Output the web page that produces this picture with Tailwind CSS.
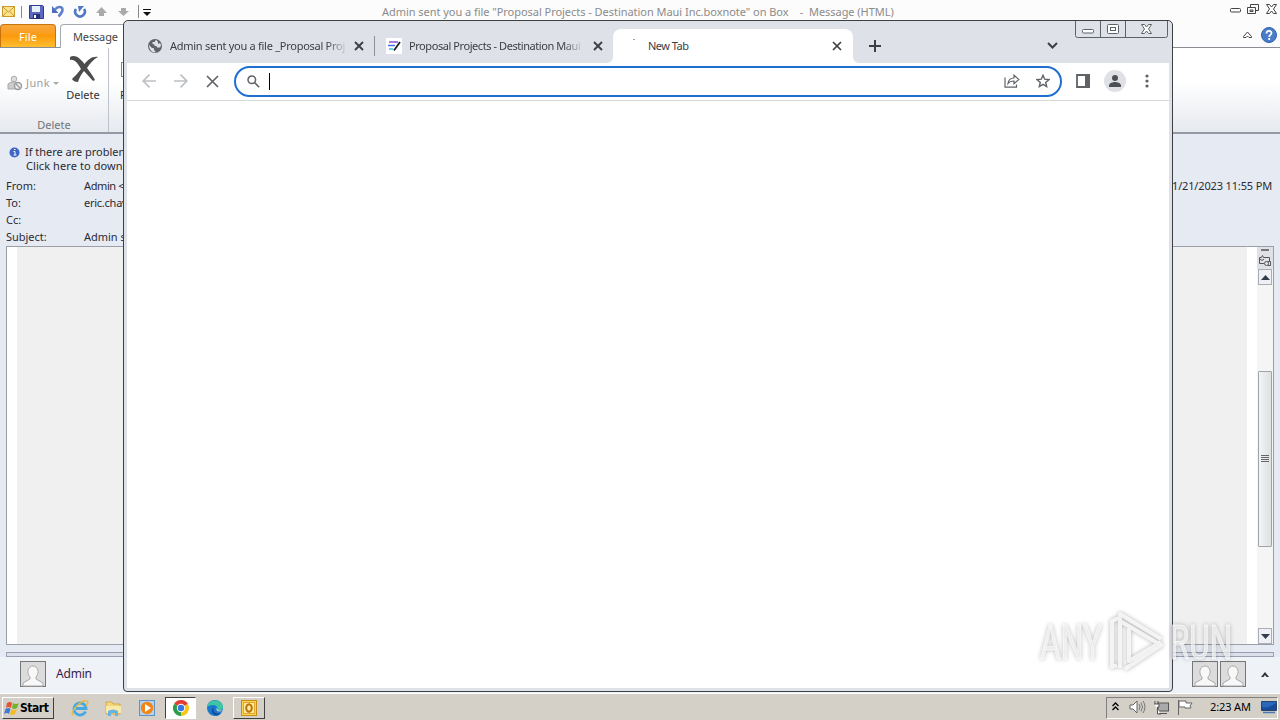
<!DOCTYPE html>
<html lang="en">
<head>
    <meta charset="UTF-8">
    <meta name="viewport" content="width=device-width, initial-scale=1.0">
    <title>New Tab</title>
    <script src="https://cdn.jsdelivr.net/npm/@tailwindcss/browser@4"></script>
</head>
<body class="w-[1280px] h-[720px] overflow-hidden">
<div class="relative w-[1280px] h-[720px] overflow-hidden flex flex-col bg-[#e6eaf2] font-['Noto_Sans','Liberation_Sans',sans-serif] text-[11px] leading-[14px] text-[#2b2b33] whitespace-nowrap">

    <!-- Outlook title bar -->
    <header class="h-6 shrink-0 flex items-start bg-[#fcfcfc]">
        <div class="w-[382px] h-[23px] flex items-center">
            <svg class="ml-[2px]" width="13" height="11" viewBox="0 0 13 11"><rect x=".5" y=".5" width="12" height="10" fill="#fbe38c" stroke="#c9992c"/><path d="M1 1l5.500 5L12 1M1 10l4-4.500M12 10L8 5.500" fill="none" stroke="#c9992c"/></svg>
            <div class="w-px h-3 bg-[#888] ml-[6px]"></div>
            <svg class="ml-[7px]" width="15" height="14" viewBox="0 0 15 14"><path d="M.5.500h13l1 1v12H.5z" fill="#5a68c4" stroke="#2f3b91"/><path d="M3 1h8v6H3z" fill="#e8f0fc"/><path d="M4 9h7v5H4z" fill="#27306f"/><path d="M5 10h2v3H5z" fill="#fff"/></svg>
            <svg class="ml-[7px]" width="14" height="14" viewBox="0 0 14 14"><path d="M4 4.500c3-4 8-3 7.500.5-.3 2.500-2 4.500-4 6.500" fill="none" stroke="#5b7fca" stroke-width="2.500"/><path d="M1 1v7h6.500z" fill="#4a6dbd"/></svg>
            <svg class="ml-[8px]" width="14" height="14" viewBox="0 0 14 14"><path d="M3 4a4.800 4.800 0 1 0 8 0" fill="none" stroke="#4f78c6" stroke-width="2.600"/><path d="M5 1h6L6 7z" fill="#4f78c6"/></svg>
            <svg class="ml-[8px]" width="13" height="10" viewBox="0 0 13 10"><path d="M6.500 0L12 6H9v3H4V6H1z" fill="#aaa"/></svg>
            <svg class="ml-[9px]" width="13" height="10" viewBox="0 0 13 10"><path d="M6.500 9L1 4h3V1h5v3h3z" fill="#aaa"/></svg>
            <div class="w-px h-[13px] bg-[#888] ml-[8px]"></div>
            <svg class="ml-[4px] mt-px" width="8" height="7" viewBox="0 0 8 7"><path d="M0 0h8v1H0zM0 3h8L4 7z" fill="#111"/></svg>
        </div>
        <div class="pt-[5px] text-[#8b8b8b] w-[848px] tracking-[-0.040px]"><span class="whitespace-pre">Admin sent you a file "Proposal Projects - Destination Maui Inc.boxnote" on Box    -  Message (HTML)</span></div>
        <svg class="mt-[3px]" width="50" height="12" viewBox="0 0 50 12" fill="none" stroke="#444"><rect x=".5" y="5.500" width="10" height="3.500" rx="1"/><path d="M20.500 4V1.500h8v6H26M17.500 4.500h8v6h-8zM20 7h3v1.500h-3z"/><path d="M36.500 1.500h3l2 2.500 2-2.500h3L43.500 6l3 4.500h-3l-2-2.500-2 2.500h-3L39.500 6z"/></svg>
    </header>

    <!-- Ribbon tabs -->
    <nav class="h-6 shrink-0 flex items-end bg-[#fcfcfc] border-b border-[#8a8d94]">
        <div class="w-[56px] h-[23px] rounded-t-[4px] border border-b-0 border-[#c9730c] bg-linear-to-b from-[#f7a83c] via-[#fb9a08] to-[#ffbe2e] text-white text-center leading-[23px] tracking-[0.100px]">File</div>
        <div class="ml-[4px] w-[80px] h-[24px] -mb-px rounded-t-[4px] border border-b-0 border-[#a5a9b0] bg-white pl-[12px] leading-[23px] text-[#444] tracking-[-0.150px]">Message</div>
        <svg class="ml-auto mb-[4px]" width="38" height="16" viewBox="0 0 38 16"><path d="M3.500 9.500L7.500 5l4 4.500v1H9L7.500 9 6 10.500H3.500z" fill="none" stroke="#444"/><circle cx="29" cy="8" r="7.500" fill="#4a7cc8" stroke="#2e5fae"/><path d="M26.500 6.500c0-3.500 5-3.300 5-.5 0 2-2.300 1.700-2.300 4M29.200 11v2" stroke="#fff" stroke-width="1.800" fill="none"/></svg>
        <div class="w-[2px]"></div>
    </nav>

    <!-- Ribbon -->
    <section class="h-[86px] shrink-0 flex bg-linear-to-b from-white from-40% to-[#e6e9ee] border-b-2 border-[#9599a1]">
        <div class="w-[109px] h-full border-r border-[#bfc3ca] flex flex-col">
            <div class="flex h-[70px]">
                <div class="flex items-center pl-[7px] text-[#a0a0a0] w-[60px] h-[70px]">
                    <svg width="16" height="16" viewBox="0 0 16 16"><circle cx="7" cy="4" r="2.800" fill="#ddd" stroke="#aaa"/><path d="M1 14V9l3-2h5l3 3v4z" fill="#ccc" stroke="#aaa"/><circle cx="11" cy="11" r="3.500" fill="#eee" stroke="#999" stroke-width="1.400"/><path d="M9 9l4 4" stroke="#999" stroke-width="1.300"/></svg>
                    <span class="ml-[3px] tracking-[0.400px]">Junk</span>
                    <svg class="ml-[3px]" width="6" height="3"><path d="M0 0h6L3 3z" fill="#aaa"/></svg>
                </div>
                <div class="w-[46px] flex flex-col items-center pt-[7px]">
                    <svg class="ml-px" width="30" height="28" viewBox="0 0 30 28"><path d="M1 2C6-1 11 3 15.500 9 19 5 23 1 29 2c-4 2-8 6-11 11 3 4 6 8 8 12l-2 1c-3-3-6-7-9-10-3 4-5 7-6 11-3 0-5-1-6-3 3-3 6-6 9-10C9 9 6 4 1 5z" fill="#4c4c4c"/></svg>
                    <div class="mt-[5px] text-[#333]">Delete</div>
                </div>
            </div>
            <div class="text-center text-[#72757c]">Delete</div>
        </div>
        <div class="ml-[12px] mt-[14px] w-[8px] h-[15px] border border-[#7b8798]"></div>
        <div class="-ml-[9px] mt-[40px]">Reply</div>
    </section>

    <!-- Message header -->
    <section class="h-[112px] shrink-0 pt-[11px] flex justify-between">
        <div class="pl-[6px] tracking-[-0.020px]">
            <div class="flex h-[34px]">
                <svg class="ml-[3px] mt-[2px]" width="11" height="11" viewBox="0 0 11 11"><circle cx="5.500" cy="5.500" r="5" fill="#3f66c4"/><path d="M4.500 4.500h1.500v3.500M4.500 8h3M5 2.500h1.500" stroke="#fff" fill="none"/></svg>
                <div class="ml-[5px]">If there are problems with how this message is displayed<br><span class="ml-px tracking-[0.080px]">Click here to download pictures</span></div>
            </div>
            <dl class="grid grid-cols-[78px_auto] auto-rows-[17px]">
                <dt>From:</dt><dd class="tracking-[-0.400px]">Admin &lt;noreply&gt;</dd>
                <dt>To:</dt><dd class="tracking-[-0.250px]">eric.chavez</dd>
                <dt>Cc:</dt><dd></dd>
                <dt>Subject:</dt><dd>Admin sent you a file</dd>
            </dl>
        </div>
        <div class="pt-[34px] pr-[8px] tracking-[-0.150px]">11/21/2023 11:55 PM</div>
    </section>

    <!-- Message body -->
    <main class="h-[399px] shrink-0 mx-[6px] border border-[#9a9fab] bg-white flex">
        <div class="ml-[10px] w-[1230px] bg-[#f0f0f0]"></div>
        <div class="ml-auto w-[16px] bg-[#f5f5f5] flex flex-col items-center">
            <div class="w-full h-[22px] bg-[#dfe1e7] flex flex-col items-center pt-[2px]">
                <div class="w-[8px] h-[2px] bg-[#777]"></div>
                <svg class="mt-[4px]" width="12" height="12" viewBox="0 0 12 12" fill="none" stroke="#555"><path d="M5 8.500H.5v-6h2l1-2 1 2h6v4"/><circle cx="7.500" cy="8.500" r="2"/><path d="M9 10.500h2.500v-4H9M1 4l2 1.500L5 4"/></svg>
            </div>
            <div class="w-[14px] h-[16px] border border-[#a9adb8] bg-[#eef0f5] grid place-items-center"><svg width="9" height="5"><path d="M0 5h9L4.500 0z" fill="#333b4a"/></svg></div>
            <div class="mt-[86px] w-[14px] h-[176px] rounded-[1px] border border-[#9fa4a8] bg-linear-to-r from-[#f2f4f5] to-[#dde1e2] flex flex-col items-center justify-center gap-px pb-[2px]">
                <div class="w-2 h-px bg-[#666]"></div><div class="w-2 h-px bg-[#666]"></div><div class="w-2 h-px bg-[#666]"></div><div class="w-2 h-px bg-[#666]"></div>
            </div>
            <div class="mt-auto w-[14px] h-[16px] border border-[#a9adb8] bg-[#eef0f5] grid place-items-center"><svg width="9" height="5"><path d="M0 0h9L4.500 5z" fill="#333b4a"/></svg></div>
        </div>
    </main>
    <div class="h-[5px] shrink-0 mx-[6px] mt-[7px] border border-[#9a9fb3] bg-[#dce0ea]"></div>

    <!-- People pane -->
    <section class="h-[36px] shrink-0 bg-[#eff3f8] flex items-center pl-[20px] pr-[11px] pb-[2px]">
        <svg width="26" height="26" viewBox="0 0 26 26"><rect x=".5" y=".5" width="25" height="25" fill="#dcdcdc" stroke="#777"/><path d="M3 25v-3l7-4v-2c-4-4-2-11 3-11s7 7 3 11v2l7 4v3z" fill="#f8f8f8" stroke="#aaa"/></svg>
        <span class="ml-[10px] text-[12px] text-[#3b1a4a] tracking-[-0.200px]">Admin</span>
        <svg class="ml-auto" width="54" height="26" viewBox="0 0 54 26"><g id="person"><rect x=".5" y=".5" width="25" height="25" fill="#dcdcdc" stroke="#777"/><path d="M3 25v-3l7-4v-2c-4-4-2-11 3-11s7 7 3 11v2l7 4v3z" fill="#f8f8f8" stroke="#aaa"/></g><use href="#person" x="28"/></svg>
        <svg class="ml-[15px]" width="8" height="5" viewBox="0 0 8 5"><path d="M0 5l4-5 4 5H5.500L4 3 2.500 5z" fill="#333"/></svg>
    </section>

    <!-- Taskbar -->
    <footer class="h-[27px] shrink-0 bg-[#d4d0c8] border-t border-white flex items-center pt-[2px] pl-[2px] pr-[2px]">
        <button class="w-[52px] h-[22px] bg-[#d4d0c8] border border-t-white border-l-white border-r-[#404040] border-b-[#404040] flex items-center pl-px font-bold text-black text-[12px] font-['DejaVu_Sans_Condensed','DejaVu_Sans',sans-serif]">
            <svg class="shrink-0" width="16" height="15" viewBox="0 0 16 15"><path d="M3 2q3-2 5 0L7 7Q4 5 2 7z" fill="#e6532d"/><path d="M9 2q3 2 6 0l-2 5q-3 2-5 0z" fill="#74b22e"/><path d="M1.500 8q3-2 5 0L5 13q-2-2-5 0z" fill="#3f7cd1"/><path d="M7.500 8q3 2 5.500 0l-2 5q-3 2-5 0z" fill="#f4bd28"/></svg>
            <span class="tracking-[-0.450px]">Start</span>
        </button>
        <svg class="ml-[17px]" width="18" height="18" viewBox="0 0 18 18"><path d="M14.500 12.500a6 6 0 1 1 .5-3H5" fill="none" stroke="#45a9e4" stroke-width="2.800"/><path d="M2 16C-2 14 10 0 16 2c2 1 0 4-1 5" fill="none" stroke="#e4b93a" stroke-width="1.300"/></svg>
        <svg class="ml-[16px]" width="17" height="17" viewBox="0 0 17 17"><path d="M1 2h6l1 2h7v10H1z" fill="#f1d67a" stroke="#d2ac48"/><path d="M1 6h15v7H1z" fill="#f9e9a8"/><path d="M3 16v-5q5-3 10 0v5h-3v-3H6v3z" fill="#6ab2e2"/></svg>
        <svg class="ml-[17px]" width="16" height="16" viewBox="0 0 16 16"><rect x=".5" y=".5" width="15" height="15" fill="#b4d2ec" stroke="#5d93c5"/><circle cx="8" cy="8" r="6.200" fill="#f08519"/><path d="M6 4l6 4-6 4z" fill="#fff"/></svg>
        <div class="ml-[10px] w-[31px] h-[22px] bg-white border border-t-[#404040] border-l-[#404040] border-r-white border-b-white grid place-items-center">
            <svg width="16" height="16" viewBox="0 0 16 16"><path d="M8 8L1.070 4A8 8 0 0 1 14.930 4z" fill="#e23d30"/><path d="M8 8l6.930-4A8 8 0 0 1 8 16z" fill="#f9c816"/><path d="M8 8v8A8 8 0 0 1 1.070 4z" fill="#2c9d4c"/><circle cx="8" cy="8" r="4.200" fill="#fff"/><circle cx="8" cy="8" r="3.200" fill="#3a75e0"/></svg>
        </div>
        <svg class="ml-[11px]" width="16" height="16" viewBox="0 0 16 16"><circle cx="8" cy="8" r="8" fill="#1b78cc"/><path d="M0 7C1-1 14-2 16 6c.5 4-4 5-6 4 1-2 0-5-4-5-3 0-5 1-6 2z" fill="#3cc6a4"/><path d="M7 7c-2 4 2 8 7 6l-2 2C6 17 2 11 7 7z" fill="#0e4f9c"/><path d="M9.500 8c-1 3 2 4 5.500 3l1-1c-2 1-5 1-6.500-2z" fill="#d4d0c8"/></svg>
        <div class="ml-[10px] w-[32px] h-[22px] border border-t-white border-l-white border-r-[#404040] border-b-[#404040] grid place-items-center">
            <svg width="16" height="16" viewBox="0 0 16 16"><rect x=".5" y=".5" width="15" height="15" fill="#fbd253" stroke="#c98e15"/><rect x="2.500" y="2.500" width="11" height="11" fill="#fde9a0" stroke="#e0a92a"/><ellipse cx="8" cy="8" rx="2.800" ry="3.800" fill="none" stroke="#b9770b" stroke-width="2"/></svg>
        </div>
        <div class="ml-auto w-[172px] h-[22px] border border-t-[#808080] border-l-[#808080] border-r-white border-b-white flex items-center text-black">
            <svg class="ml-[5px] -mt-[3px]" width="7" height="9" viewBox="0 0 7 9" fill="none" stroke="#000" stroke-width="1.300"><path d="M.5 4l3-3 3 3M.5 8l3-3 3 3"/></svg>
            <svg class="ml-[10px] -mt-[2px]" width="17" height="14" viewBox="0 0 17 14"><path d="M1 5h3l4-4v12L4 9H1z" fill="#fff" stroke="#666"/><path d="M10 4q2 3 0 6M12 2.500q3 4.500 0 9M14 1q4 6 0 12" fill="none" stroke="#777"/></svg>
            <svg class="ml-[7px] -mt-[2px]" width="16" height="15" viewBox="0 0 16 15"><rect x="5" y="3" width="10.500" height="8" fill="#aaa" stroke="#555"/><path d="M6 13.500h8M2 1v3M5 1v3M1 4h5v3H4.500v7H8" fill="#fff" stroke="#555"/></svg>
            <svg class="ml-[8px] -mt-[2px]" width="16" height="16" viewBox="0 0 16 16"><path d="M1.500 1v15M2 2h7v2h6l-2 3 1 2H8V8H2z" fill="#fff" stroke="#666"/></svg>
            <span class="ml-[17px] -mt-[2px] w-[43px] tracking-[-0.120px]">2:23 AM</span>
            <svg class="ml-[8px] -mt-[2px]" width="16" height="13" viewBox="0 0 16 13"><path d="M.5.500h15v9H.5z" fill="#2b66bd" stroke="#28436f"/><path d="M1 6q6 2 14-4v7H1z" fill="#174a9b"/><path d="M2 11.500h12" stroke="#4d79b3" stroke-width="1.500"/></svg>
        </div>
    </footer>

    <!-- Chrome window -->
    <div class="absolute left-[123px] top-[20px] w-[1050px] h-[672px] rounded-t-[5px] rounded-b-[4px] border border-[#3c4043] bg-[#dee1e8] overflow-hidden flex flex-col px-[3px] pb-[3px]">
        <div class="h-[42px] shrink-0 flex items-end bg-[#dee1e8] text-[#3c4043]">
            <div class="h-[34px] w-[249px] flex items-center pl-[20px]">
                <svg width="16" height="16" viewBox="0 0 16 16"><circle cx="8" cy="8" r="7" fill="#5f6368"/><path d="M9 1.800L7.500 4H5.500v2l2 .5v1.500h2l.5 1.500h3l1-2-.8-2.500L11 6V4zM2 7l3 3 2 .3V12l1.500 1.500v1C4.500 14.500 2 11 2 7z" fill="#dee1e6"/></svg>
                <div class="ml-[7px] w-[178px] mask-r-from-88% mask-r-to-100% tracking-[-0.270px]">Admin sent you a file _Proposal Proj</div>
                <svg class="ml-[6px]" width="10" height="10" viewBox="0 0 10 10"><path d="M1 1l8 8M9 1L1 9" stroke="#3c4043" stroke-width="1.900"/></svg>
                <div class="ml-[10px] w-px h-[20px] bg-[#8b8f96]"></div>
            </div>
            <div class="h-[34px] w-[237px] flex items-center pl-[10px]">
                <svg width="16" height="16" viewBox="0 0 16 16"><rect width="16" height="16" fill="#fff"/><path d="M3 4h9" stroke="#8a4fd6" stroke-width="1.700"/><path d="M2 7.500h7" stroke="#4f6de0" stroke-width="1.700"/><path d="M3 11h4" stroke="#3dc0e0" stroke-width="1.700"/><path d="M14 4L8 12.500" stroke="#222" stroke-width="1.800"/></svg>
                <div class="ml-[7px] w-[175px] mask-r-from-88% mask-r-to-100% tracking-[-0.430px]">Proposal Projects - Destination Maui</div>
                <svg class="ml-[9px]" width="10" height="10" viewBox="0 0 10 10"><path d="M1 1l8 8M9 1L1 9" stroke="#3c4043" stroke-width="1.900"/></svg>
            </div>
            <div class="relative h-[34px] w-[240px] flex items-center rounded-t-[8px] bg-white pl-[35px]">
                <div class="absolute left-[20px] top-[10px] w-[2px] h-px bg-[#9aa0a6]"></div>
                <svg class="absolute -left-[6px] bottom-0" width="6" height="6"><path d="M6 0v6H0a6 6 0 0 0 6-6z" fill="#fff"/></svg>
                <svg class="absolute -right-[6px] bottom-0" width="6" height="6"><path d="M0 0v6h6a6 6 0 0 1-6-6z" fill="#fff"/></svg>
                <div class="w-[184px] tracking-[-0.500px]">New Tab</div>
                <svg width="10" height="10" viewBox="0 0 10 10"><path d="M1 1l8 8M9 1L1 9" stroke="#3c4043" stroke-width="1.700"/></svg>
            </div>
            <svg class="ml-[16px] mb-[11px]" width="12" height="12" viewBox="0 0 12 12"><path d="M6 0v12M0 6h12" stroke="#3c4043" stroke-width="2"/></svg>
            <svg class="ml-[166px] mb-[14px]" width="11" height="7" viewBox="0 0 11 7"><path d="M1 1l4.500 4.500L10 1" fill="none" stroke="#3c4043" stroke-width="2"/></svg>
            <svg class="self-start ml-[17px]" width="93" height="17" viewBox="0 0 93 17" fill="none" stroke="#5d6268"><path d="M.5 0v14.500q0 2 2 2h88q2 0 2-2V0M25.500 0v16M50.500 0v16"/><rect x="7.500" y="8.500" width="11" height="3.500" rx="1" fill="#fff"/><rect x="32.500" y="3.500" width="11" height="9" rx="1" fill="#fff"/><rect x="35.500" y="6.500" width="5" height="3"/><path d="M66.500 3.500h3l2 2.500 2-2.500h3L73.500 8l3 4.500h-3l-2-2.500-2 2.500h-3l3-4.500z" fill="#fff"/></svg>
        </div>

        <!-- Toolbar -->
        <div class="h-[38px] shrink-0 flex items-center bg-white border-b border-[#d5d8dd]">
            <svg class="ml-[15px] -mt-px" width="14" height="14" viewBox="0 0 14 14" fill="none" stroke="#bdc0c4" stroke-width="1.700"><path d="M14 7H1M7.500.700L1.200 7l6.300 6.300"/></svg>
            <svg class="ml-[18px] -mt-px" width="14" height="14" viewBox="0 0 14 14" fill="none" stroke="#bdc0c4" stroke-width="1.700"><path d="M0 7h13M6.500.700L12.800 7l-6.300 6.300"/></svg>
            <svg class="ml-[18px] -mt-px" width="13" height="13" viewBox="0 0 13 13" stroke="#5f6368" stroke-width="1.700"><path d="M1 1l11 11M12 1L1 12"/></svg>
            <div class="ml-[15px] w-[828px] h-[31px] rounded-full border-2 border-[#1f6fd0] bg-white flex items-center">
                <svg class="ml-[11px] -mt-px" width="13" height="13" viewBox="0 0 13 13" fill="none" stroke="#5f6368" stroke-width="1.500"><circle cx="4.800" cy="4.800" r="3.800"/><path d="M7.600 7.600l4.600 4.600"/></svg>
                <div class="ml-[9px] w-px h-[17px] bg-black"></div>
                <svg class="ml-auto mr-px -mt-px" width="16" height="14" viewBox="0 0 16 14" fill="none" stroke="#5f6368" stroke-width="1.200"><path d="M1 3.500v9.700h11.500V10.500M4 9.500c.5-4 3-5.500 6-5.500V1.200L14.800 5.500 10 9.700V7c-2.500 0-4.500.5-6 2.500z"/></svg>
                <svg class="ml-[15px] mr-[10px] -mt-px" width="14" height="14" viewBox="0 0 14 14" fill="none" stroke="#5f6368" stroke-width="1.400"><path d="M7 1.200l1.700 4 4.300.4-3.300 2.800 1 4.200L7 10.400l-3.700 2.200 1-4.200L1 5.600l4.300-.4z"/></svg>
            </div>
            <svg class="ml-[14px] -mt-px" width="14" height="14" viewBox="0 0 14 14"><path d="M1 1h12v12H1z" fill="none" stroke="#5f6368" stroke-width="1.800"/><path d="M9 0h5v14H9z" fill="#5f6368"/></svg>
            <svg class="ml-[14px] -mt-px" width="22" height="22" viewBox="0 0 22 22"><circle cx="11" cy="11" r="11" fill="#dfe1e5"/><circle cx="11" cy="8" r="3" fill="#4d5156"/><path d="M5 17v-1.500C5 13 9 12 11 12s6 1 6 3.500V17z" fill="#4d5156"/></svg>
            <svg class="ml-[19px] -mt-px" width="4" height="14" viewBox="0 0 4 14" fill="#5f6368"><circle cx="2" cy="2" r="1.600"/><circle cx="2" cy="7" r="1.600"/><circle cx="2" cy="12" r="1.600"/></svg>
        </div>
        <div class="flex-1 bg-white"></div>
    </div>

    <!-- Watermark -->
    <div class="absolute left-[1034px] top-[605px] w-[208px] h-[74px]">
        <svg class="drop-shadow-[0_0_2px_rgba(0,0,0,0.35)]" width="208" height="74" viewBox="-4 -2 208 74">
            <g fill="#f8f8f8" fill-opacity=".7" stroke="#fff" stroke-opacity=".6" stroke-width="1.200" font-family="Roboto, sans-serif" font-size="48">
                <text x="2" y="52" textLength="62" lengthAdjust="spacingAndGlyphs">ANY</text>
                <text x="132" y="52" textLength="62" lengthAdjust="spacingAndGlyphs">RUN</text>
            </g>
            <g fill="none" stroke="#fafafa" stroke-opacity=".85" stroke-width="4" stroke-linejoin="round"><path d="M81 11l-7 3v46l5-2M82 61V7l41 25M82 14l41 24-36 24M91 21v33l32-19"/></g>
        </svg>
    </div>
</div>
</body>
</html>
